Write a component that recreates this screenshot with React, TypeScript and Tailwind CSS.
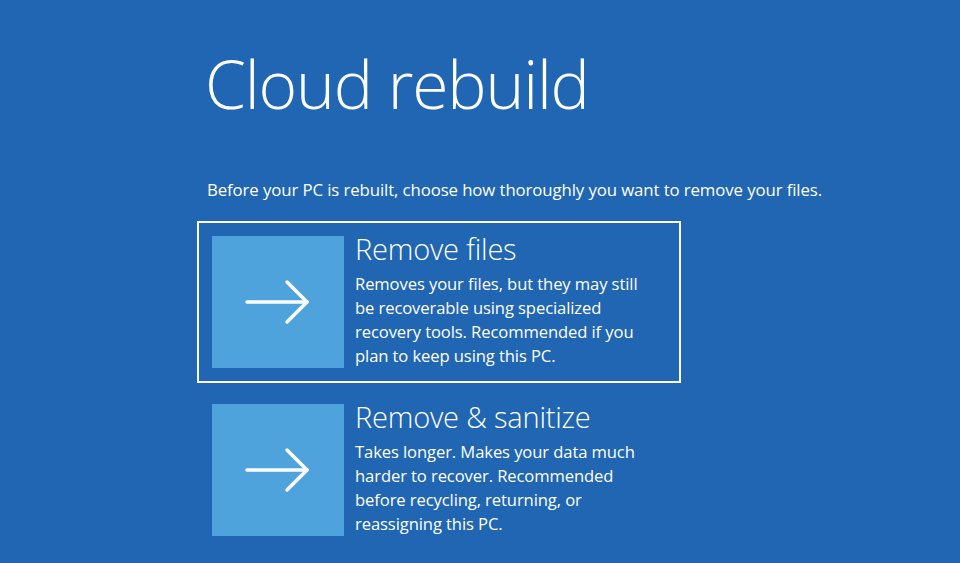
import React from "react";

function Arrow() {
  return (
    <svg width="66" height="46" viewBox="0 0 66 46" fill="none" stroke="white" strokeWidth="3.5" strokeLinecap="round" strokeLinejoin="round">
      <path d="M2 23 H62" />
      <path d="M42 3 L62 23 L42 43" />
    </svg>
  );
}

function Option({ title, lines, selected }: { title: string; lines: string[]; selected?: boolean }) {
  return (
    <div className={`flex w-[484px] gap-[11px] p-[13px] border-2 ${selected ? "border-white" : "border-transparent"}`}>
      <div className="w-[132px] h-[132px] bg-[#4fa3dd] flex items-center justify-center shrink-0">
        <Arrow />
      </div>
      <div className="flex flex-col">
        <div className="text-[29px] leading-[32px] font-light -mt-[3px] mb-[7px] tracking-[-0.2px]">{title}</div>
        {lines.map((l, i) => (
          <div key={i} className="text-[16.6px] leading-[24px] tracking-[-0.1px]">{l}</div>
        ))}
      </div>
    </div>
  );
}

export default function App() {
  return (
    <div className="w-[960px] h-[563px] bg-[#2066b2] text-white overflow-hidden" style={{ fontFamily: '"Open Sans", "Noto Sans", sans-serif' }}>
      <div className="flex flex-col pl-[197px] pt-[38px]">
        <h1 className="pl-[8px] text-[66px] leading-[90px] font-light tracking-[-1.2px]">Cloud rebuild</h1>
        <p className="pl-[10px] mt-[50px] text-[16.8px] leading-[24px] tracking-[-0.1px]">Before your PC is rebuilt, choose how thoroughly you want to remove your files.</p>
        <div className="mt-[19px] flex flex-col gap-[6px]">
          <Option
            selected
            title="Remove files"
            lines={[
              "Removes your files, but they may still",
              "be recoverable using specialized",
              "recovery tools. Recommended if you",
              "plan to keep using this PC.",
            ]}
          />
          <Option
            title="Remove & sanitize"
            lines={[
              "Takes longer. Makes your data much",
              "harder to recover. Recommended",
              "before recycling, returning, or",
              "reassigning this PC.",
            ]}
          />
        </div>
      </div>
    </div>
  );
}
